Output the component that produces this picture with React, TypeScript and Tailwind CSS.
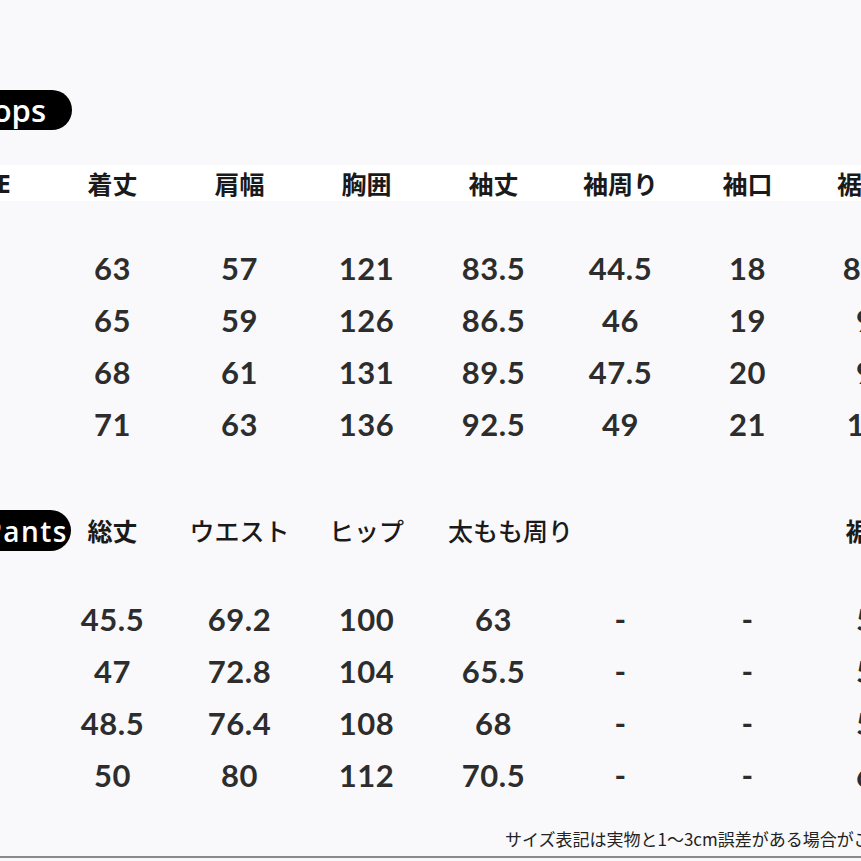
import React from "react";

const jp = { fontFamily: '"Noto Sans CJK JP", "Noto Sans", sans-serif' };
const num = { fontFamily: 'Lato, "Open Sans", sans-serif' };
const pill = { fontFamily: '"Open Sans", "Noto Sans", sans-serif' };

const topsHead = ["SIZE", "着丈", "肩幅", "胸囲", "袖丈", "袖周り", "袖口", "裾周り"];
const topsRows = [
  ["S", "63", "57", "121", "83.5", "44.5", "18", "86.5"],
  ["M", "65", "59", "126", "86.5", "46", "19", "91"],
  ["L", "68", "61", "131", "89.5", "47.5", "20", "96"],
  ["XL", "71", "63", "136", "92.5", "49", "21", "101"],
];
const pantsRows = [
  ["S", "45.5", "69.2", "100", "63", "-", "-", "52"],
  ["M", "47", "72.8", "104", "65.5", "-", "-", "54"],
  ["L", "48.5", "76.4", "108", "68", "-", "-", "56"],
  ["XL", "50", "80", "112", "70.5", "-", "-", "60"],
];

function Row({ cells }: { cells: string[] }) {
  return (
    <div className="grid grid-cols-[repeat(8,127px)] h-[52px] items-center">
      {cells.map((c, i) => (
        <div
          key={i}
          className="flex justify-center whitespace-nowrap text-[31px] font-bold tracking-[0.5px] text-[#2d2d2d] leading-none"
          style={num}
        >
          {i === 0 ? "" : c}
        </div>
      ))}
    </div>
  );
}

export default function App() {
  return (
    <div className="w-[861px] h-[861px] overflow-hidden bg-[#f9f9fb] relative">
      <div className="ml-[-78px] w-[1016px] pt-[90px]">
        {/* Tops pill */}
        <div className="h-[40px] flex">
          <div
            className="ml-[32px] w-[118px] h-[40px] rounded-full bg-black text-white flex items-center justify-end pr-[26px] text-[31px] font-semibold leading-none"
            style={pill}
          >
            Tops
          </div>
        </div>
        {/* Tops header */}
        <div className="mt-[35px] grid grid-cols-[repeat(8,127px)] h-[36px] items-center bg-white">
          {topsHead.map((h, i) => (
            <div
              key={i}
              className="flex justify-center whitespace-nowrap text-[25px] font-bold text-[#1a1a1a] leading-none"
              style={i === 0 ? pill : jp}
            >
              {h}
            </div>
          ))}
        </div>
        <div className="mt-[41px]">
          {topsRows.map((r, i) => (
            <Row key={i} cells={r} />
          ))}
        </div>
        {/* Pants header */}
        <div className="mt-[60px] grid grid-cols-[repeat(8,127px)] h-[40px] items-center">
          <div className="flex justify-end mr-[-22px]">
            <div
              className="w-[130px] h-[41px] rounded-full bg-black text-white flex items-center justify-end pr-[3px] text-[28px] tracking-[1.5px] font-semibold leading-none"
              style={pill}
            >
              Pants
            </div>
          </div>
          {["総丈", "ウエスト", "ヒップ", "太もも周り", "", "", "裾幅"].map((h, i) => (
            <div
              key={i}
              className={
                "flex justify-center whitespace-nowrap text-[25px] text-[#1a1a1a] leading-none " +
                (i === 3 ? "pl-[34px] font-medium" : i === 6 ? "pr-[8px] font-bold" : i === 0 ? "font-bold" : "font-medium")
              }
              style={jp}
            >
              {h}
            </div>
          ))}
        </div>
        <div className="mt-[43px]">
          {pantsRows.map((r, i) => (
            <Row key={i} cells={r} />
          ))}
        </div>
        <div
          className="mt-[27px] ml-[583px] h-[20px] flex items-center whitespace-nowrap text-[17px] text-[#222] leading-none"
          style={jp}
        >
          サイズ表記は実物と1～3cm誤差がある場合がございます。
        </div>
      </div>
      <div className="absolute left-0 right-0 bottom-[3px] h-[2px] bg-[#8a8a8a]" />
    </div>
  );
}
